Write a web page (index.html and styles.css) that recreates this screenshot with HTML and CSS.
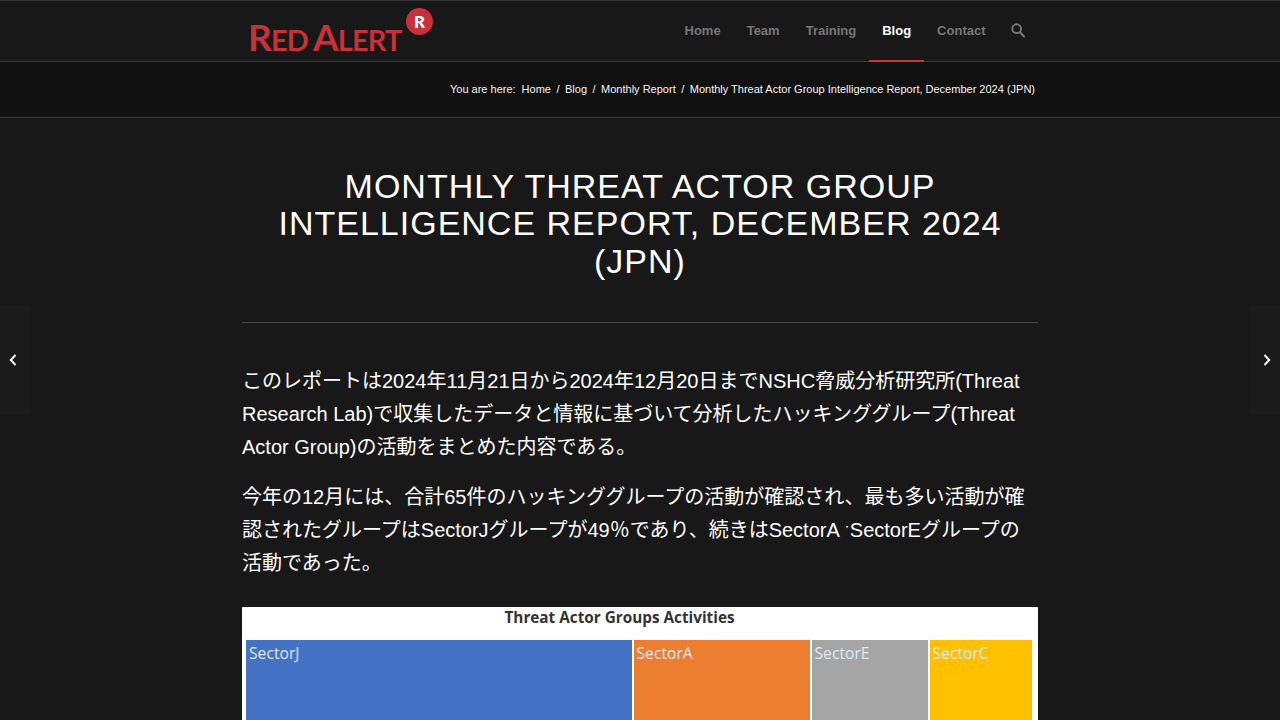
FILE: index.html
```html
<!DOCTYPE html>
<html lang="ja">
<head>
<meta charset="utf-8">
<title>Monthly Threat Actor Group Intelligence Report, December 2024 (JPN)</title>
<link rel="stylesheet" href="styles.css">
</head>
<body>
<header class="site-header">
  <div class="container header-inner">
    <a class="logo" href="#">
      <span class="logo-text"><span class="logo-cap">R</span>ED <span class="logo-cap">A</span>LERT</span>
      <span class="logo-badge">R</span>
    </a>
    <nav class="main-nav">
      <a class="nav-item" href="#">Home</a>
      <a class="nav-item" href="#">Team</a>
      <a class="nav-item" href="#">Training</a>
      <a class="nav-item active" href="#">Blog</a>
      <a class="nav-item" href="#">Contact</a>
      <a class="nav-item nav-search" href="#" aria-label="Search">
        <svg width="14" height="15" viewBox="0 0 14 15" fill="none" stroke="#777" stroke-width="2"><circle cx="5.7" cy="5.7" r="4.4"/><path d="M9 9.2l4 4.3" stroke-linecap="round"/></svg>
      </a>
    </nav>
  </div>
</header>
<div class="breadcrumb-bar">
  <div class="container breadcrumbs">
    <span>You are here:</span>
    <a class="crumb-first" href="#">Home</a><span class="sep">/</span>
    <a href="#">Blog</a><span class="sep">/</span>
    <a href="#">Monthly Report</a><span class="sep">/</span>
    <span>Monthly Threat Actor Group Intelligence Report, December 2024 (JPN)</span>
  </div>
</div>
<main class="container content">
  <h1 class="post-title">Monthly Threat Actor Group Intelligence Report, December 2024 (JPN)</h1>
  <hr class="title-rule">
  <p>このレポートは2024年11月21日から2024年12月20日までNSHC脅威分析研究所(Threat Research Lab)で収集したデータと情報に基づいて分析したハッキンググループ(Threat Actor Group)の活動をまとめた内容である。</p>
  <p>今年の12月には、合計65件のハッキンググループの活動が確認され、最も多い活動が確認されたグループはSectorJグループが49％であり、続きはSectorA ˑSectorEグループの活動であった。</p>
  <figure class="chart">
    <figcaption class="chart-title">Threat Actor Groups Activities</figcaption>
    <div class="treemap">
      <div class="cell cell-j">SectorJ</div>
      <div class="cell cell-a">SectorA</div>
      <div class="cell cell-e">SectorE</div>
      <div class="cell cell-c">SectorC</div>
    </div>
  </figure>
</main>
<a class="side-nav prev" href="#" aria-label="Previous">
  <svg width="8" height="12" viewBox="0 0 8 12" fill="none" stroke="#fff" stroke-width="2"><path d="M6.5 1L1.8 6l4.7 5"/></svg>
</a>
<a class="side-nav next" href="#" aria-label="Next">
  <svg width="8" height="12" viewBox="0 0 8 12" fill="none" stroke="#fff" stroke-width="2"><path d="M1.5 1l4.7 5-4.7 5"/></svg>
</a>
</body>
</html>
```
FILE: styles.css
```css
* { box-sizing: border-box; }
html, body { height: 720px; overflow: hidden; }
body {
  margin: 0;
  background: #181818;
  color: #fff;
  font-family: "Liberation Sans", "Noto Sans CJK JP", sans-serif;
}
a { color: inherit; text-decoration: none; }
.container { width: 796px; margin: 0 auto; }
.site-header {
  height: 62px;
  background: #181818;
  border-top: 1px solid #333;
  border-bottom: 1px solid #3a3a3a;
}
.header-inner { display: flex; justify-content: space-between; height: 60px; }
.logo { position: relative; display: block; width: 200px; height: 60px; }
.logo-text {
  position: absolute;
  left: 6px;
  top: 16px;
  font-family: "Lato", sans-serif;
  font-weight: 700;
  font-size: 29px;
  line-height: 40px;
  letter-spacing: -0.9px;
  word-spacing: -1px;
  color: #c8303a;
  white-space: nowrap;
}
.logo-cap { font-size: 37px; }
.logo-badge {
  position: absolute;
  left: 164px;
  top: 7px;
  width: 27px;
  height: 27px;
  border-radius: 50%;
  background: #c8303a;
  color: #fff;
  font-family: "Lato", sans-serif;
  font-weight: 900;
  font-size: 17px;
  line-height: 27px;
  text-align: center;
}
.main-nav { display: flex; margin-right: 5.5px; }
.nav-item {
  display: block;
  height: 61px;
  padding: 0 13px;
  font-size: 13px;
  font-weight: 700;
  line-height: 59px;
  color: #777;
  border-bottom: 2px solid transparent;
}
.nav-item.active { color: #fff; border-bottom-color: #c8303a; }
.nav-search { padding: 22px 7.5px 0 12.5px; line-height: 0; }
.breadcrumb-bar {
  height: 56px;
  background: #111;
  border-bottom: 1px solid #3a3a3a;
}
.breadcrumbs {
  display: flex;
  justify-content: flex-end;
  align-items: center;
  height: 53px;
  padding-right: 3px;
  font-size: 11px;
  color: #f4f4f4;
  white-space: nowrap;
}
.crumb-first { margin-left: 6px; }
.sep { margin: 0 5.5px; }
.content { padding-top: 50px; }
.post-title {
  margin: 0;
  padding: 0 20px;
  font-size: 34px;
  font-weight: 400;
  line-height: 37.4px;
  letter-spacing: 1px;
  text-align: center;
  text-transform: uppercase;
}
.title-rule { height: 1px; margin: 42px 0 42px; border: 0; background: #444; }
p {
  margin: 0 0 17px;
  font-size: 20px;
  line-height: 33px;
  color: #fff;
}
.chart { margin: 27px 0 0; background: #fff; height: 300px; padding: 0 5px 0 4px; }
.chart-title {
  height: 33px;
  padding-right: 40px;
  font-family: "Open Sans", sans-serif;
  font-size: 15.3px;
  font-weight: 700;
  line-height: 20px;
  text-align: center;
  color: #333;
}
.treemap { display: flex; gap: 1.5px; height: 260px; }
.cell {
  padding: 3px 3px;
  font-family: "Open Sans", sans-serif;
  font-size: 15.7px;
  line-height: 21px;
  color: #dfe8f6;
}
.cell-j { width: 386px; background: #4472c4; }
.cell-a { width: 176.5px; background: #ed7d31; }
.cell-e { width: 116.5px; background: #a5a5a5; }
.cell-c { width: 102.5px; background: #ffc000; }
.side-nav {
  position: fixed;
  top: 305px;
  width: 30px;
  height: 110px;
  background: #1b1b1b;
  display: flex;
  align-items: center;
}
.prev { left: 0; padding-left: 9px; }
.next { right: 0; justify-content: flex-end; padding-right: 9px; }
```
